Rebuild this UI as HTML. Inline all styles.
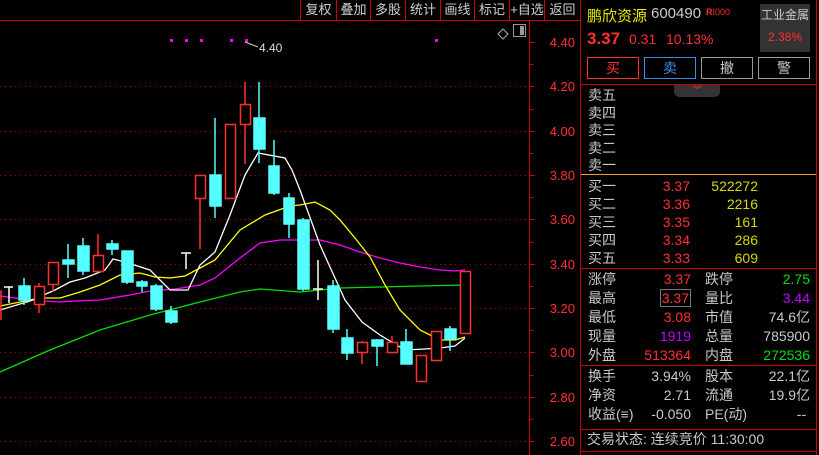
<!DOCTYPE html>
<html><head><meta charset="utf-8"><style>
*{margin:0;padding:0;box-sizing:border-box}
body{width:819px;height:455px;background:#000;overflow:hidden;position:relative;font-family:"Liberation Sans","Noto Sans CJK SC",sans-serif;font-size:13px;color:#c8c8c8}
.a{position:absolute;white-space:nowrap}
.tb{position:absolute;top:0;height:20px;border-left:1px solid #c00;color:#d0d0d0;font-size:13px;line-height:19px;text-align:center}
.r{color:#ff3030}.g{color:#00e000}.y{color:#d8d800}.p{color:#c000ff}
.btn{position:absolute;top:57px;height:22px;width:52px;border:1px solid #999;text-align:center;line-height:20px;font-size:14px}
.hl{position:absolute;left:581px;width:235px;height:1px;background:#c00}
</style></head><body>
<svg class="a" style="left:0;top:0" width="581" height="455">
<g stroke="#a00" stroke-dasharray="1,4" stroke-width="1">
<line x1="0" y1="86.5" x2="529" y2="86.5"/><line x1="0" y1="131.5" x2="529" y2="131.5"/><line x1="0" y1="175.5" x2="529" y2="175.5"/><line x1="0" y1="219.5" x2="529" y2="219.5"/><line x1="0" y1="264.5" x2="529" y2="264.5"/><line x1="0" y1="308.5" x2="529" y2="308.5"/><line x1="0" y1="352.5" x2="529" y2="352.5"/><line x1="0" y1="397.5" x2="529" y2="397.5"/><line x1="0" y1="441.5" x2="529" y2="441.5"/>
</g>
<line x1="0" y1="20.5" x2="581" y2="20.5" stroke="#c00"/>
<line x1="529.5" y1="20" x2="529.5" y2="455" stroke="#c00"/>
<line x1="580.5" y1="0" x2="580.5" y2="455" stroke="#c00"/>
<g stroke="#c00">
<line x1="529" y1="42.5" x2="535" y2="42.5"/><line x1="529" y1="86.5" x2="535" y2="86.5"/><line x1="529" y1="131.5" x2="535" y2="131.5"/><line x1="529" y1="175.5" x2="535" y2="175.5"/><line x1="529" y1="219.5" x2="535" y2="219.5"/><line x1="529" y1="264.5" x2="535" y2="264.5"/><line x1="529" y1="308.5" x2="535" y2="308.5"/><line x1="529" y1="352.5" x2="535" y2="352.5"/><line x1="529" y1="397.5" x2="535" y2="397.5"/><line x1="529" y1="441.5" x2="535" y2="441.5"/>
<line x1="529" y1="64.5" x2="533" y2="64.5"/><line x1="529" y1="109.5" x2="533" y2="109.5"/><line x1="529" y1="153.5" x2="533" y2="153.5"/><line x1="529" y1="197.5" x2="533" y2="197.5"/><line x1="529" y1="242.5" x2="533" y2="242.5"/><line x1="529" y1="286.5" x2="533" y2="286.5"/><line x1="529" y1="330.5" x2="533" y2="330.5"/><line x1="529" y1="375.5" x2="533" y2="375.5"/><line x1="529" y1="419.5" x2="533" y2="419.5"/>
</g>
<g fill="#ff3030" font-family="Liberation Sans" font-size="13" text-anchor="end">
<text x="575" y="47">4.40</text><text x="575" y="91">4.20</text><text x="575" y="136">4.00</text><text x="575" y="180">3.80</text><text x="575" y="224">3.60</text><text x="575" y="269">3.40</text><text x="575" y="313">3.20</text><text x="575" y="357">3.00</text><text x="575" y="402">2.80</text><text x="575" y="446">2.60</text>
</g>
<path d="M498 34l5-5 5 5-5 5z" fill="none" stroke="#aaa"/>
<rect x="513.5" y="24.5" width="12" height="12" fill="none" stroke="#999"/><rect x="520" y="26" width="4" height="9" fill="#999"/>
<g fill="#f0f">
<rect x="170" y="39" width="3" height="3"/><rect x="185" y="39" width="3" height="3"/><rect x="200" y="39" width="3" height="3"/><rect x="230" y="39" width="3" height="3"/><rect x="245" y="39" width="3" height="3"/><rect x="435" y="39" width="3" height="3"/>
</g>
<polyline points="245,42 258,47" stroke="#ccc" fill="none"/>
<text x="259" y="52" fill="#ddd" font-size="12" font-family="Liberation Sans">4.40</text>
<polyline fill="none" stroke="#00e000" stroke-width="1.3" points="0,372 50,350 100,330 150,315 200,302 240,292 260,289 300,292 320,290 340,288 380,287 420,286 465,285"/>
<polyline fill="none" stroke="#f0f" stroke-width="1.3" points="0,296 30,300 60,302 75,301 100,300 130,295 150,291 175,289 200,285 215,278 240,258 260,243 280,240 300,240 320,240 340,245 360,252 380,258 400,263 420,267 440,270 455,271 465,270"/>
<polyline fill="none" stroke="#ff0" stroke-width="1.3" points="0,306 40,298 60,298 80,292 100,285 120,275 140,273 155,277 170,278 185,276 200,268 215,260 240,230 265,215 290,206 300,205 315,202 330,210 340,220 355,238 370,257 385,285 400,310 420,330 440,340 455,340 465,337"/>
<polyline fill="none" stroke="#fff" stroke-width="1.3" points="0,310 30,301 55,290 70,282 85,278 105,270 113,259 125,262 150,270 160,280 170,290 188,290 200,265 215,252 230,215 245,175 258,153 285,158 292,170 300,190 320,245 345,300 362,322 380,335 405,350 425,349 440,348 455,346 465,338"/>
<g stroke-width="1.5">
<g stroke="#ff3030" fill="#000">
<line x1="1" y1="290" x2="1" y2="320"/>
<line x1="39" y1="283" x2="39" y2="313"/><rect x="34.5" y="286.5" width="10" height="18"/>
<line x1="53" y1="284" x2="53" y2="292"/><rect x="48.5" y="262.5" width="10" height="22"/>
<line x1="98" y1="234" x2="98" y2="255"/><rect x="93.5" y="255.5" width="10" height="16"/>
<line x1="200" y1="198" x2="200" y2="249"/><rect x="195.5" y="175.5" width="10" height="23"/>
<rect x="225.5" y="124.5" width="10" height="74"/>
<line x1="245" y1="82" x2="245" y2="164"/><rect x="240.5" y="104.5" width="10" height="20"/>
<line x1="362" y1="341" x2="362" y2="364"/><rect x="357.5" y="342.5" width="10" height="10"/>
<line x1="392" y1="336" x2="392" y2="352"/><rect x="387.5" y="342.5" width="10" height="10"/>
<rect x="416.5" y="355.5" width="10" height="26"/>
<rect x="431.5" y="331.5" width="10" height="29"/>
<rect x="460.5" y="271.5" width="10" height="62"/>
</g>
<g stroke="#55ffff" fill="#55ffff">
<line x1="24" y1="278" x2="24" y2="305"/><rect x="19" y="286" width="11" height="14"/>
<line x1="68" y1="244" x2="68" y2="278"/><rect x="63" y="260" width="11" height="4"/>
<line x1="83" y1="238" x2="83" y2="275"/><rect x="78" y="246" width="11" height="25"/>
<line x1="112" y1="240" x2="112" y2="255"/><rect x="107" y="244" width="11" height="5"/>
<line x1="127" y1="251" x2="127" y2="284"/><rect x="122" y="251" width="11" height="31"/>
<line x1="142" y1="280" x2="142" y2="292"/><rect x="137" y="282" width="10" height="4"/>
<line x1="156" y1="284" x2="156" y2="311"/><rect x="151" y="286" width="11" height="23"/>
<line x1="171" y1="306" x2="171" y2="324"/><rect x="166" y="311" width="11" height="11"/>
<line x1="215" y1="118" x2="215" y2="218"/><rect x="210" y="175" width="11" height="31"/>
<line x1="259" y1="82" x2="259" y2="163"/><rect x="254" y="118" width="11" height="31"/>
<line x1="274" y1="140" x2="274" y2="195"/><rect x="269" y="166" width="10" height="27"/>
<line x1="289" y1="193" x2="289" y2="238"/><rect x="284" y="198" width="10" height="26"/>
<line x1="303" y1="218" x2="303" y2="291"/><rect x="298" y="220" width="11" height="69"/>
<line x1="333" y1="280" x2="333" y2="333"/><rect x="328" y="286" width="11" height="43"/>
<line x1="347" y1="329" x2="347" y2="360"/><rect x="342" y="338" width="11" height="15"/>
<line x1="377" y1="339" x2="377" y2="366"/><rect x="372" y="340" width="11" height="6"/>
<line x1="406" y1="329" x2="406" y2="364"/><rect x="401" y="342" width="11" height="22"/>
<line x1="450" y1="326" x2="450" y2="351"/><rect x="445" y="329" width="11" height="10"/>
</g>
<g stroke="#fff">
<line x1="4" y1="287" x2="13" y2="287"/><line x1="9" y1="287" x2="9" y2="303"/>
<line x1="181" y1="253" x2="191" y2="253"/><line x1="186" y1="253" x2="186" y2="269"/>
<line x1="313" y1="289" x2="323" y2="289"/><line x1="318" y1="260" x2="318" y2="300"/>
</g>
</g>
</svg>
<div class="tb" style="left:300px;width:36px">复权</div>
<div class="tb" style="left:336px;width:34px">叠加</div>
<div class="tb" style="left:370px;width:35px">多股</div>
<div class="tb" style="left:405px;width:35px">统计</div>
<div class="tb" style="left:440px;width:34px">画线</div>
<div class="tb" style="left:474px;width:35px">标记</div>
<div class="tb" style="left:509px;width:35px">+自选</div>
<div class="tb" style="left:544px;width:36px">返回</div>

<div class="a" style="left:816px;top:0;width:1px;height:455px;background:#c00"></div>
<div class="a" style="left:587px;top:5px;font-size:15px;color:#e8e800">鹏欣资源</div>
<div class="a" style="left:651px;top:5px;font-size:15px;color:#ccc">600490</div>
<div class="a r" style="left:706px;top:7px;font-size:9px;font-weight:bold">R<span style="font-weight:normal">I000</span></div>
<div class="a" style="left:760px;top:4px;width:50px;height:48px;background:#333;text-align:center;font-size:12px;color:#ccc;line-height:22px">工业金属<br><span class="r">2.38%</span></div>
<div class="a r" style="left:587px;top:29px;font-size:17px;font-weight:bold">3.37</div>
<div class="a r" style="left:629px;top:31px;font-size:14px">0.31</div>
<div class="a r" style="left:666px;top:31px;font-size:14px">10.13%</div>
<div class="btn r" style="left:587px;border-color:#e33">买</div>
<div class="btn" style="left:644px;border-color:#3a8ee0;color:#3a8ee0">卖</div>
<div class="btn" style="left:701px">撤</div>
<div class="btn" style="left:758px">警</div>
<div class="hl" style="top:84px"></div>
<div class="a" style="left:674px;top:85px;width:46px;height:12px;background:#333;border-radius:0 0 5px 5px;color:#f33;font-size:9px;text-align:center;line-height:10px">︾</div>
<div class="a" style="left:588px;top:87px;line-height:17.5px;font-size:14px">卖五<br>卖四<br>卖三<br>卖二<br>卖一</div>
<div class="a" style="left:581px;top:174px;width:235px;height:1px;background:#e8a030"></div>
<div class="a" style="left:588px;top:177px;line-height:18px;font-size:14px">买一<br>买二<br>买三<br>买四<br>买五</div>
<div class="a r" style="left:640px;top:177px;width:50px;text-align:right;line-height:18px;font-size:14px">3.37<br>3.36<br>3.35<br>3.34<br>3.33</div>
<div class="a y" style="left:700px;top:177px;width:58px;text-align:right;line-height:18px;font-size:14px">522272<br>2216<br>161<br>286<br>609</div>
<div class="hl" style="top:268px"></div>
<div class="a" style="left:588px;top:270px;line-height:19px;font-size:14px">涨停<br>最高<br>最低<br>现量<br>外盘</div>
<div class="a" style="left:620px;top:270px;width:71px;text-align:right;line-height:19px;font-size:14px"><span class="r">3.37</span><br><span class="r" style="border:1px solid #777;padding:0 1px">3.37</span><br><span class="r">3.08</span><br><span class="p">1919</span><br><span class="r">513364</span></div>
<div class="a" style="left:705px;top:270px;line-height:19px;font-size:14px">跌停<br>量比<br>市值<br>总量<br>内盘</div>
<div class="a" style="left:740px;top:270px;width:70px;text-align:right;line-height:19px;font-size:14px"><span class="g">2.75</span><br><span class="p">3.44</span><br>74.6亿<br>785900<br><span class="g">272536</span></div>
<div class="hl" style="top:365px"></div>
<div class="a" style="left:588px;top:367px;line-height:19px;font-size:14px">换手<br>净资<br>收益(≡)</div>
<div class="a" style="left:620px;top:367px;width:71px;text-align:right;line-height:19px;font-size:14px">3.94%<br>2.71<br>-0.050</div>
<div class="a" style="left:705px;top:367px;line-height:19px;font-size:14px">股本<br>流通<br>PE(动)</div>
<div class="a" style="left:740px;top:367px;width:70px;text-align:right;line-height:19px;font-size:14px">22.1亿<br>19.9亿<br>--&nbsp;</div>
<div class="hl" style="top:429px"></div>
<div class="a" style="left:587px;top:430px;font-size:14px;line-height:18px">交易状态: 连续竞价 11:30:00</div>
<div class="hl" style="top:451px"></div>
</body></html>
